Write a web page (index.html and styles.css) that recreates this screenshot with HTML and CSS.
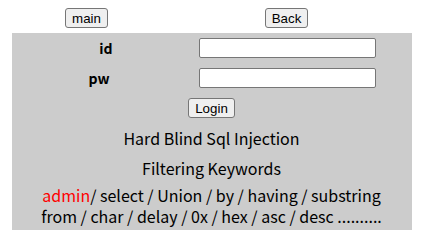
FILE: index.html
```html
<!DOCTYPE html>
<html>
<head>
  <link rel="stylesheet" href="styles.css">
</head>
<body>

<div class="nav">
  <div class="nav-cell"><button type="button">main</button></div>
  <div class="nav-cell"><button type="button">Back</button></div>
</div>

<div class="panel">
  <form class="login" action="#" method="post">
    <label class="label label-id" for="id">id</label>
    <div class="field"><input type="text" id="id" name="id"></div>

    <label class="label label-pw" for="pw">pw</label>
    <div class="field"><input type="password" id="pw" name="pw"></div>

    <div class="submit"><input type="submit" value="Login"></div>
  </form>

  <p class="title">Hard Blind Sql Injection</p>
  <p class="title">Filtering Keywords</p>
  <p class="keywords">
    <span class="red">admin</span>/ select / Union / by / having / substring<br>
    from / char / delay / 0x / hex / asc / desc ..........
  </p>
</div>

</body>
</html>
```

FILE: styles.css
```css
body {
  margin: 8px;
  font-family: "Noto Sans CJK KR", "Noto Sans", sans-serif;
  color: #000;
}

/* top row with the two buttons */
.nav {
  width: 400px;
  height: 25px;
  margin: 0 auto;
  display: grid;
  grid-template-columns: 150px 250px;
}
.nav-cell {
  display: flex;
  justify-content: center;
  align-items: flex-start;
}

button,
input[type=submit] {
  font-family: "Liberation Sans", Arial, sans-serif;
  font-size: 13.33px;
  height: 20px;
  padding: 0 6px;
  background-color: #efefef;
  border: 1px solid #767676;
  border-radius: 3px;
  color: #000;
}

/* grey box */
.panel {
  width: 400px;
  margin: 0 auto;
  background-color: #ccc;
  padding-top: 5px;
  padding-bottom: 3px;
  text-align: center;
}

.login {
  display: grid;
  grid-template-columns: 187px 213px;
  grid-template-rows: 30px 30px 25px;
}
.label {
  height: 20px;
  display: flex;
  align-items: center;
  justify-content: center;
  font-weight: bold;
  font-size: 14px;
}
.label-id {
  padding-left: 2px;
}
.label-pw {
  padding-right: 12px;
}
.field {
  display: flex;
  align-items: flex-start;
}
input[type=text],
input[type=password] {
  width: 177px;
  height: 20px;
  padding: 1px 2px;
  box-sizing: border-box;
  border: 1px solid #767676;
  border-radius: 2px;
  background: #fff;
}
.submit {
  grid-column: 1 / 3;
  display: flex;
  justify-content: center;
  align-items: flex-start;
}

.title {
  margin: 0;
  font-size: 16px;
  line-height: 30px;
}
.keywords {
  margin: 0;
  padding-top: 2px;
  font-size: 16px;
  line-height: 21px;
}
.red {
  color: #ff0000;
}
```
